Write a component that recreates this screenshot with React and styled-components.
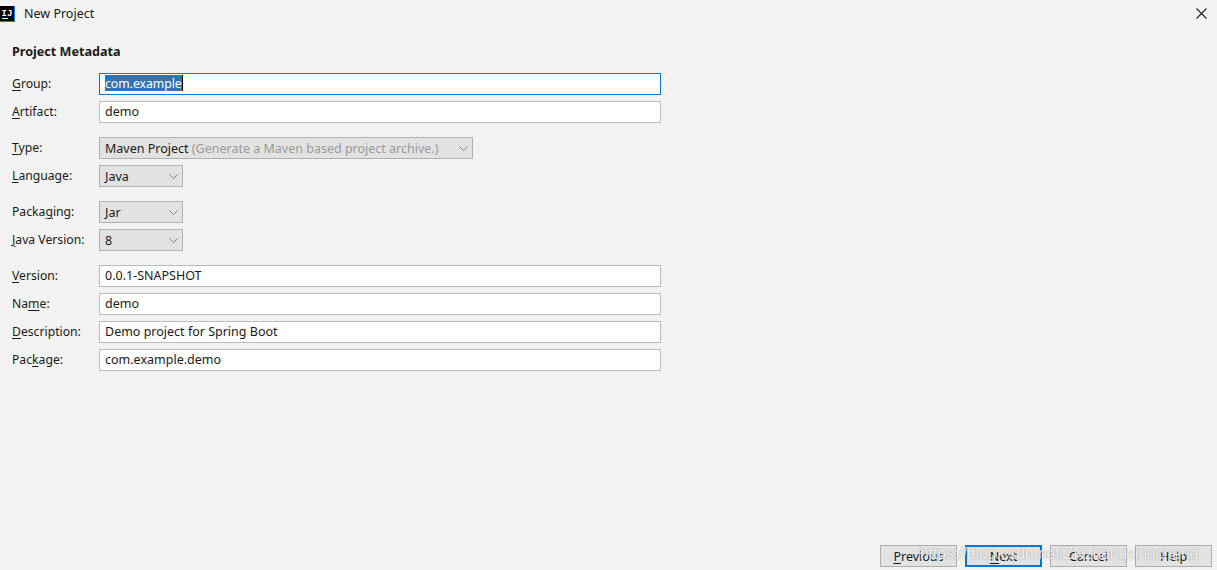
import React from "react"
import styled, { createGlobalStyle } from "styled-components"

const GlobalStyle = createGlobalStyle`
  html, body {
    margin: 0;
    padding: 0;
    background: #f2f2f2;
  }
`

const Dialog = styled.div`
  position: relative;
  width: 1217px;
  height: 570px;
  overflow: hidden;
  display: flex;
  flex-direction: column;
  background: #f2f2f2;
  color: #1a1a1a;
  font-family: "Noto Sans", "Open Sans", sans-serif;
  font-size: 12.5px;
`

const TitleBar = styled.div`
  height: 27px;
  display: flex;
  align-items: center;
  gap: 9px;
  padding-right: 10px;
`

const TitleText = styled.span`
  flex: 1;
  line-height: 27px;
`

const Content = styled.div`
  flex: 1;
  padding: 16px 0 0 12px;
`

const Heading = styled.div`
  font-weight: 700;
  font-size: 12.6px;
  line-height: 18px;
  height: 18px;
  margin-bottom: 12px;
`

const Group = styled.div`
  display: flex;
  flex-direction: column;
  gap: 6px;
  margin-bottom: 14px;
`

const Row = styled.div`
  display: flex;
  align-items: center;
  height: 22px;
`

const Label = styled.label`
  width: 87px;
  flex-shrink: 0;
  font-size: 12.2px;
  padding-bottom: 2px;
`

const Mnemonic = styled.span`
  text-decoration: underline;
  text-underline-offset: 2px;
  text-decoration-thickness: 1px;
`

const TextField = styled.div`
  box-sizing: border-box;
  width: 562px;
  height: 22px;
  line-height: 19px;
  padding-left: 5px;
  background: #fff;
  border: 1px solid ${(p) => (p.$focused ? "#0078d7" : "#bdbdbd")};
`

const Selected = styled.span`
  display: inline-block;
  height: 16px;
  line-height: 18px;
  margin-top: 1px;
  vertical-align: top;
  font-size: 12.2px;
  background: #2f75b5;
  color: #fff;
  border-right: 1px solid #000;
`

const Select = styled.div`
  box-sizing: border-box;
  width: ${(p) => p.$width}px;
  height: 22px;
  display: flex;
  align-items: center;
  justify-content: space-between;
  padding: 0 4px 0 5px;
  background: #e2e2e2;
  border: 1px solid #b0b0b0;
`

const Hint = styled.span`
  color: #9a9a9a;
`

const Footer = styled.div`
  display: flex;
  justify-content: flex-end;
  gap: 8px;
  padding: 0 5px 3px 0;
`

const Button = styled.div`
  box-sizing: border-box;
  width: 77px;
  height: 22px;
  display: flex;
  align-items: center;
  justify-content: center;
  background: #e2e2e2;
  border: ${(p) => (p.$primary ? "2px solid #0078d7" : "1px solid #adadad")};
`

const Watermark = styled.div`
  position: absolute;
  left: 920px;
  top: 544px;
  font-family: "Liberation Sans", sans-serif;
  font-size: 15.6px;
  line-height: 20px;
  white-space: nowrap;
  color: rgba(255, 255, 255, 0.85);
  text-shadow: 0 0 1.5px rgba(110, 110, 110, 0.75);
`

const AppIcon = () => (
  <svg width="15" height="16" viewBox="0 0 15 16" style={{ flexShrink: 0 }}>
    <rect width="15" height="16" fill="#087cfa" />
    <rect width="14" height="15" fill="#000" />
    <rect x="2" y="12" width="6" height="1" fill="#fff" />
    <text x="1.5" y="9.5" fontFamily="Liberation Mono, monospace" fontWeight="700" fontSize="9" fill="#fff">
      IJ
    </text>
  </svg>
)

const CloseIcon = () => (
  <svg width="11" height="11" viewBox="0 0 11 11">
    <path d="M0.5 0.5L10.5 10.5M10.5 0.5L0.5 10.5" stroke="#222" strokeWidth="1.1" fill="none" />
  </svg>
)

const Chevron = () => (
  <svg width="9" height="5" viewBox="0 0 9 5">
    <path d="M0.5 0.5L4.5 4.5L8.5 0.5" stroke="#808080" strokeWidth="1" fill="none" />
  </svg>
)

// one underlined letter per label, as in the Swing dialog
const FieldLabel = ({ before = "", m, after }) => (
  <Label>
    {before}
    <Mnemonic>{m}</Mnemonic>
    {after}
  </Label>
)

const App = () => (
  <Dialog>
    <GlobalStyle />
    <TitleBar>
      <AppIcon />
      <TitleText>New Project</TitleText>
      <CloseIcon />
    </TitleBar>
    <Content>
      <Heading>Project Metadata</Heading>
      <Group>
        <Row>
          <FieldLabel m="G" after="roup:" />
          <TextField $focused>
            <Selected>com.example</Selected>
          </TextField>
        </Row>
        <Row>
          <FieldLabel m="A" after="rtifact:" />
          <TextField>demo</TextField>
        </Row>
      </Group>
      <Group>
        <Row>
          <FieldLabel m="T" after="ype:" />
          <Select $width={374}>
            <span>
              Maven Project <Hint>(Generate a Maven based project archive.)</Hint>
            </span>
            <Chevron />
          </Select>
        </Row>
        <Row>
          <FieldLabel m="L" after="anguage:" />
          <Select $width={84}>
            Java
            <Chevron />
          </Select>
        </Row>
      </Group>
      <Group>
        <Row>
          <FieldLabel before="Packa" m="g" after="ing:" />
          <Select $width={84}>
            Jar
            <Chevron />
          </Select>
        </Row>
        <Row>
          <FieldLabel m="J" after="ava Version:" />
          <Select $width={84}>
            8
            <Chevron />
          </Select>
        </Row>
      </Group>
      <Group>
        <Row>
          <FieldLabel m="V" after="ersion:" />
          <TextField>0.0.1-SNAPSHOT</TextField>
        </Row>
        <Row>
          <FieldLabel before="Na" m="m" after="e:" />
          <TextField>demo</TextField>
        </Row>
        <Row>
          <FieldLabel m="D" after="escription:" />
          <TextField>Demo project for Spring Boot</TextField>
        </Row>
        <Row>
          <FieldLabel before="Pac" m="k" after="age:" />
          <TextField>com.example.demo</TextField>
        </Row>
      </Group>
    </Content>
    <Footer>
      <Button>
        <span>
          <Mnemonic>P</Mnemonic>revious
        </span>
      </Button>
      <Button $primary>
        <span>
          <Mnemonic>N</Mnemonic>ext
        </span>
      </Button>
      <Button>Cancel</Button>
      <Button>Help</Button>
    </Footer>
    <Watermark>https://blog.csdn.net/ZNzhangxingcheng</Watermark>
  </Dialog>
)

export default App
